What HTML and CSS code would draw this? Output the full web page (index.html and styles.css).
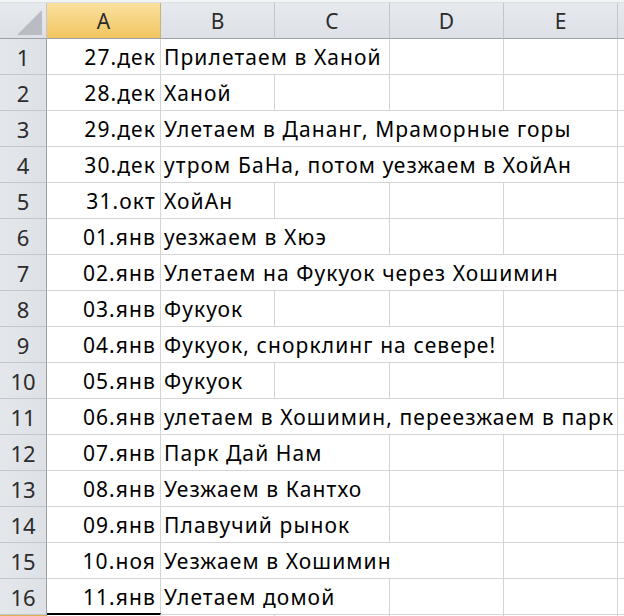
FILE: index.html
```html
<!DOCTYPE html>
<html>
<head>
<meta charset="utf-8">
<link rel="stylesheet" href="styles.css">
</head>
<body>
<div class="topstrip"></div>
<div class="sheet">
  <div class="hd corner"><span class="tri"></span></div>
  <div class="hd col sel">A</div>
  <div class="hd col">B</div>
  <div class="hd col">C</div>
  <div class="hd col">D</div>
  <div class="hd col">E</div>
  <div class="hd col last"></div>

  <div class="rh">1</div><div class="c num">27.дек</div><div class="c txt span2">Прилетаем в Ханой</div><div class="c"></div><div class="c"></div><div class="c last"></div>
  <div class="rh">2</div><div class="c num">28.дек</div><div class="c txt">Ханой</div><div class="c"></div><div class="c"></div><div class="c"></div><div class="c last"></div>
  <div class="rh">3</div><div class="c num">29.дек</div><div class="c txt span4">Улетаем в Дананг, Мраморные горы</div><div class="c last"></div>
  <div class="rh">4</div><div class="c num">30.дек</div><div class="c txt span4">утром БаНа, потом уезжаем в ХойАн</div><div class="c last"></div>
  <div class="rh">5</div><div class="c num">31.окт</div><div class="c txt">ХойАн</div><div class="c"></div><div class="c"></div><div class="c"></div><div class="c last"></div>
  <div class="rh">6</div><div class="c num">01.янв</div><div class="c txt span2">уезжаем в Хюэ</div><div class="c"></div><div class="c"></div><div class="c last"></div>
  <div class="rh">7</div><div class="c num">02.янв</div><div class="c txt span4">Улетаем на Фукуок через Хошимин</div><div class="c last"></div>
  <div class="rh">8</div><div class="c num">03.янв</div><div class="c txt">Фукуок</div><div class="c"></div><div class="c"></div><div class="c"></div><div class="c last"></div>
  <div class="rh">9</div><div class="c num">04.янв</div><div class="c txt span3">Фукуок, снорклинг на севере!</div><div class="c"></div><div class="c last"></div>
  <div class="rh">10</div><div class="c num">05.янв</div><div class="c txt">Фукуок</div><div class="c"></div><div class="c"></div><div class="c"></div><div class="c last"></div>
  <div class="rh">11</div><div class="c num">06.янв</div><div class="c txt span4">улетаем в Хошимин, переезжаем в парк</div><div class="c last"></div>
  <div class="rh">12</div><div class="c num">07.янв</div><div class="c txt span2">Парк Дай Нам</div><div class="c"></div><div class="c"></div><div class="c last"></div>
  <div class="rh">13</div><div class="c num">08.янв</div><div class="c txt span2">Уезжаем в Кантхо</div><div class="c"></div><div class="c"></div><div class="c last"></div>
  <div class="rh">14</div><div class="c num">09.янв</div><div class="c txt span2">Плавучий рынок</div><div class="c"></div><div class="c"></div><div class="c last"></div>
  <div class="rh">15</div><div class="c num">10.ноя</div><div class="c txt span3">Уезжаем в Хошимин</div><div class="c"></div><div class="c last"></div>
  <div class="rh">16</div><div class="c num">11.янв</div><div class="c txt span2">Улетаем домой</div><div class="c"></div><div class="c"></div><div class="c last"></div>
  <div class="rh selrow"></div><div class="c active"></div><div class="c"></div><div class="c"></div><div class="c"></div><div class="c"></div><div class="c last"></div>
</div>
</body>
</html>
```
FILE: styles.css
```css
html, body {
  margin: 0;
  padding: 0;
  background: #ffffff;
  overflow: hidden;
  width: 624px;
  height: 616px;
}
body {
  font-family: "Noto Sans", "Open Sans", sans-serif;
  font-size: 21px;
  letter-spacing: 1.1px;
  color: #000;
}
.topstrip {
  height: 2px;
  background: #f3f4f6;
  border-bottom: 1px solid #dcdfe3;
}
.sheet {
  display: grid;
  grid-template-columns: 47px 114px 114px 115px 114px 114px 60px;
  grid-auto-rows: 36px;
  grid-template-rows: 36px;
}
.sheet > div {
  box-sizing: border-box;
  border-right: 1px solid #d4d4d4;
  border-bottom: 1px solid #d4d4d4;
  overflow: hidden;
  white-space: nowrap;
}
.hd {
  background: linear-gradient(#e6e9ee, #dde1e7);
  display: flex;
  align-items: center;
  justify-content: center;
  color: #2c2c2c;
  font-size: 21px;
  letter-spacing: 0;
  border-bottom: 1px solid #9ea2a8 !important;
  border-right: 1px solid #c3c7cd !important;
}
.hd.sel {
  background: linear-gradient(#fae19f, #f2c562);
  border-right: 1px solid #c9b27a !important;
}
.corner {
  position: relative;
}
.tri {
  position: absolute;
  right: 4px;
  bottom: 3px;
  width: 0;
  height: 0;
  border-left: 25px solid transparent;
  border-bottom: 25px solid #b9bdc3;
}
.rh {
  background: linear-gradient(90deg, #e4e7ec, #dde1e6);
  display: flex;
  align-items: center;
  justify-content: center;
  color: #2c2c2c;
  font-size: 22px;
  letter-spacing: 0;
  border-right: 1px solid #9ea2a8 !important;
  border-bottom: 1px solid #c3c7cd !important;
}
.rh.selrow {
  background: linear-gradient(#fae19f, #f2c562);
  border-top: 1px solid #e0b050;
}
.c {
  display: flex;
  align-items: center;
  padding-top: 1px;
}
.num {
  justify-content: flex-end;
  padding-right: 4px;
}
.txt {
  padding-left: 3px;
}
.span2 { grid-column: span 2; }
.span3 { grid-column: span 3; }
.span4 { grid-column: span 4; }
.c.last {
  border-right: none;
}
.active {
  border-top: 2px solid #000;
  margin-top: -2px;
}
```
